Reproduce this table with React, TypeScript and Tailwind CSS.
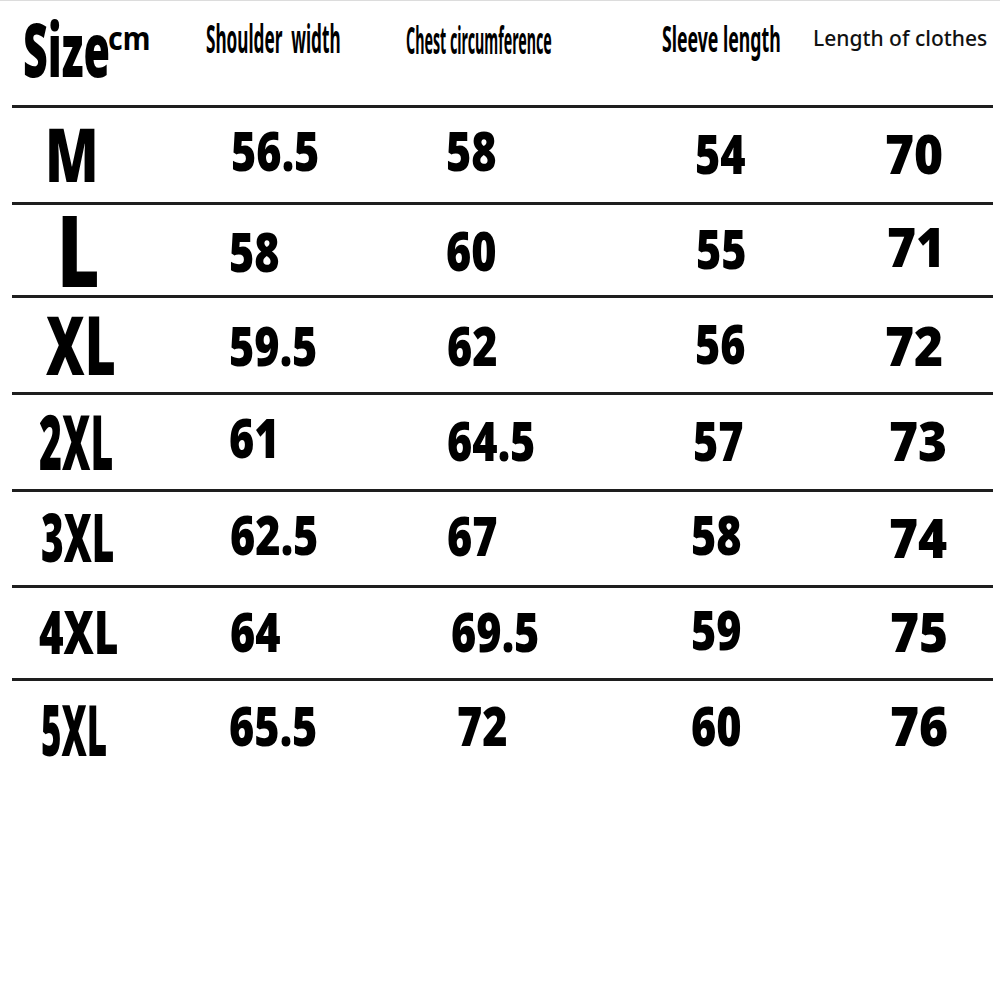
import type { ReactNode } from "react";

type Cell = [string, string];
type Row = { h: string; size: string; sizeCls: string; cells: Cell[] };

// Row heights include the 3px rule under each row.
const rows: Row[] = [
  {
    h: "h-[97px] border-b-[3px]",
    size: "M",
    sizeCls: "ml-[33px] text-[75px] scale-x-[0.74]",
    cells: [
      ["56.5", "ml-[2px] -translate-y-[3px]"],
      ["58", "-translate-y-[3px]"],
      ["54", "ml-[4px]"],
      ["70", ""],
    ],
  },
  {
    h: "h-[93px] border-b-[3px]",
    size: "L",
    sizeCls: "ml-[45px] text-[99px] scale-x-[0.74]",
    cells: [
      ["58", "translate-y-[3px]"],
      ["60", "translate-y-[2px]"],
      ["55", "ml-[5px]"],
      ["71", "ml-[2px] -translate-y-[2px]"],
    ],
  },
  {
    h: "h-[97px] border-b-[3px]",
    size: "XL",
    sizeCls: "ml-[34px] text-[81px] scale-x-[0.66]",
    cells: [
      ["59.5", "translate-y-[2px]"],
      ["62", "ml-[1px] translate-y-[2px]"],
      ["56", "ml-[4px]"],
      ["72", "translate-y-[2px]"],
    ],
  },
  {
    h: "h-[97px] border-b-[3px]",
    size: "2XL",
    sizeCls: "ml-[27px] text-[77px] scale-x-[0.51]",
    cells: [
      ["61", "-translate-y-[3px]"],
      ["64.5", "ml-[1px]"],
      ["57", "ml-[2px]"],
      ["73", "ml-[4px]"],
    ],
  },
  {
    h: "h-[96px] border-b-[3px]",
    size: "3XL",
    sizeCls: "ml-[29px] text-[67px] scale-x-[0.58]",
    cells: [
      ["62.5", "ml-[1px] -translate-y-[3px]"],
      ["67", "ml-[1px] -translate-y-[2px]"],
      ["58", "-translate-y-[3px]"],
      ["74", "ml-[4px]"],
    ],
  },
  {
    h: "h-[93px] border-b-[3px]",
    size: "4XL",
    sizeCls: "ml-[27px] text-[60px] scale-x-[0.7]",
    cells: [
      ["64", "ml-[1px]"],
      ["69.5", "ml-[5px]"],
      ["59", "-translate-y-[2px]"],
      ["75", "ml-[5px]"],
    ],
  },
  {
    h: "h-[91px]",
    size: "5XL",
    sizeCls: "ml-[29px] text-[70px] scale-x-[0.5] translate-y-[4px]",
    cells: [
      ["65.5", ""],
      ["72", "ml-[11px]"],
      ["60", ""],
      ["76", "ml-[5px]"],
    ],
  },
];

function Squeeze({ className, children }: { className: string; children: ReactNode }) {
  return (
    <span className={"inline-block origin-left whitespace-nowrap leading-none " + className}>
      {children}
    </span>
  );
}

export default function App() {
  return (
    <div className="w-[1000px] h-[1000px] bg-white text-black font-['Noto_Sans','Liberation_Sans',sans-serif] border-t border-[#dcdcdc] overflow-hidden">
      <div className="ml-[12px] w-[981px]">
        {/* header */}
        <div className="grid grid-cols-[194px_200px_256px_151px_1fr] h-[107px] border-b-[3px] border-[#1e1e1e] items-start">
          <div className="flex items-start pl-[11px]">
            <div className="w-[85px] pt-[11px]">
              <Squeeze className="text-[74px] font-black scale-x-[0.58]">Size</Squeeze>
            </div>
            <div className="pt-[20px]">
              <Squeeze className="text-[33px] font-bold scale-x-[0.86]">cm</Squeeze>
            </div>
          </div>
          <div className="pt-[17px]">
            <Squeeze className="text-[39px] font-bold scale-x-[0.44]">Shoulder&nbsp; width</Squeeze>
          </div>
          <div className="pt-[20px]">
            <Squeeze className="text-[37px] font-bold scale-x-[0.385]">Chest circumference</Squeeze>
          </div>
          <div className="pt-[20px]">
            <Squeeze className="text-[35px] font-bold scale-x-[0.505]">Sleeve length</Squeeze>
          </div>
          <div className="pt-[27px]">
            <Squeeze className="text-[21px] font-medium text-[#111]">Length of clothes</Squeeze>
          </div>
        </div>

        {rows.map((r) => (
          <div
            key={r.size}
            className={
              "grid grid-cols-[217px_217px_245px_194px_1fr] grid-rows-[100%] items-center pb-[4px] border-[#1e1e1e] " +
              r.h
            }
          >
            <div>
              <Squeeze className={"font-black " + r.sizeCls}>{r.size}</Squeeze>
            </div>
            {r.cells.map(([v, cls], i) => (
              <div key={i}>
                <Squeeze
                  className={
                    "text-[54px] font-black " +
                    (i === 3 ? "scale-x-[0.92] " : "scale-x-[0.8] ") +
                    cls
                  }
                >
                  {v}
                </Squeeze>
              </div>
            ))}
          </div>
        ))}
      </div>
    </div>
  );
}
